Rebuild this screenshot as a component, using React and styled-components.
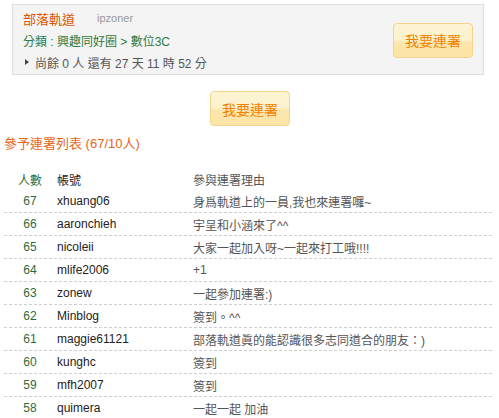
import React from 'react';
import styled, { createGlobalStyle } from 'styled-components';

const GlobalStyle = createGlobalStyle`
    body {
        margin:0;
        background:#fff;
        font-family:"Liberation Sans", "Noto Sans CJK TC", sans-serif;
        font-size:12px;
        color:#555;
    }
`

const Page = styled.div`
    width:499px;
    padding-top:4px;
`

const InfoBox = styled.div`
    box-sizing:border-box;
    width:472px;
    margin-left:12px;
    display:flex;
    flex-direction:row;
    justify-content:space-between;
    align-items:center;
    padding:2px 10px 1px 10px;
    background:#f4f4f4;
    border:1px solid #dedede;
`

const InfoText = styled.div`
    display:flex;
    flex-direction:column;
`

const Line = styled.div`
    display:flex;
    align-items:center;
    height:22px;
    white-space:nowrap;
`

const Title = styled.span`
    font-size:13px;
    color:#dd5500;
`

const Owner = styled.span`
    margin-left:22px;
    font-size:11px;
    color:#999;
`

const Category = styled(Line)`
    color:#2e7a3c;
`

const Remain = styled(Line)`
    color:#555;
    padding-left:2px;
`

const Arrow = styled.span`
    display:inline-block;
    width:0;
    height:0;
    border-left:4px solid #444;
    border-top:3px solid transparent;
    border-bottom:3px solid transparent;
    margin-right:6px;
`

const JoinButton = styled.button`
    box-sizing:border-box;
    width:80px;
    height:35px;
    padding:0;
    border:1px solid #f3d48a;
    border-radius:4px;
    background:linear-gradient(to bottom, #fcf4d3 0%, #fcf2cc 48%, #fde6ad 56%, #fde4a6 100%);
    color:#f08200;
    font-family:"Liberation Sans", "Noto Sans CJK TC", sans-serif;
    font-size:14px;
    cursor:pointer;
`

const CenterRow = styled.div`
    display:flex;
    justify-content:center;
    margin-top:16px;
    padding-left:1px;
`

const ListTitle = styled.div`
    margin:8px 0 0 4px;
    height:20px;
    line-height:20px;
    font-size:13px;
    color:#e8651a;
`

const List = styled.div`
    width:488px;
    margin:14px 0 0 4px;
`

const Row = styled.div`
    display:grid;
    grid-template-columns:52px 137px 1fr;
    align-items:center;
    height:${p => (p.head ? '22px' : '22px')};
    border-bottom:${p => (p.head ? 'none' : '1px dashed #cfcfcf')};
    white-space:nowrap;
`

const Num = styled.span`
    text-align:center;
    color:#2e6b3a;
`

const Account = styled.span`
    padding-left:1px;
    color:#222;
`

const Reason = styled.span`
    color:#555;
`

const rows = [
    [67, 'xhuang06', '身爲軌道上的一員,我也來連署囉~'],
    [66, 'aaronchieh', '宇呈和小涵來了^^'],
    [65, 'nicoleii', '大家一起加入呀~一起來打工哦!!!!'],
    [64, 'mlife2006', '+1'],
    [63, 'zonew', '一起參加連署:)'],
    [62, 'Minblog', '簽到。^^'],
    [61, 'maggie61121', '部落軌道眞的能認識很多志同道合的朋友：)'],
    [60, 'kunghc', '簽到'],
    [59, 'mfh2007', '簽到'],
    [58, 'quimera', '一起一起 加油'],
]

const App = () => {
    return (
        <>
        <GlobalStyle />
        <Page>
            <InfoBox>
                <InfoText>
                    <Line>
                        <Title>部落軌道</Title>
                        <Owner>ipzoner</Owner>
                    </Line>
                    <Category>分類 : 興趣同好圈 &gt; 數位3C</Category>
                    <Remain><Arrow />尚餘 0 人 還有 27 天 11 時 52 分</Remain>
                </InfoText>
                <JoinButton>我要連署</JoinButton>
            </InfoBox>
            <CenterRow>
                <JoinButton>我要連署</JoinButton>
            </CenterRow>
            <ListTitle>參予連署列表 (67/10人)</ListTitle>
            <List>
                <Row head>
                    <Num>人數</Num>
                    <Account>帳號</Account>
                    <Reason>參與連署理由</Reason>
                </Row>
                {rows.map(([n, name, reason]) => (
                    <Row key={n}>
                        <Num>{n}</Num>
                        <Account>{name}</Account>
                        <Reason>{reason}</Reason>
                    </Row>
                ))}
            </List>
        </Page>
        </>
    )
}

export default App;
